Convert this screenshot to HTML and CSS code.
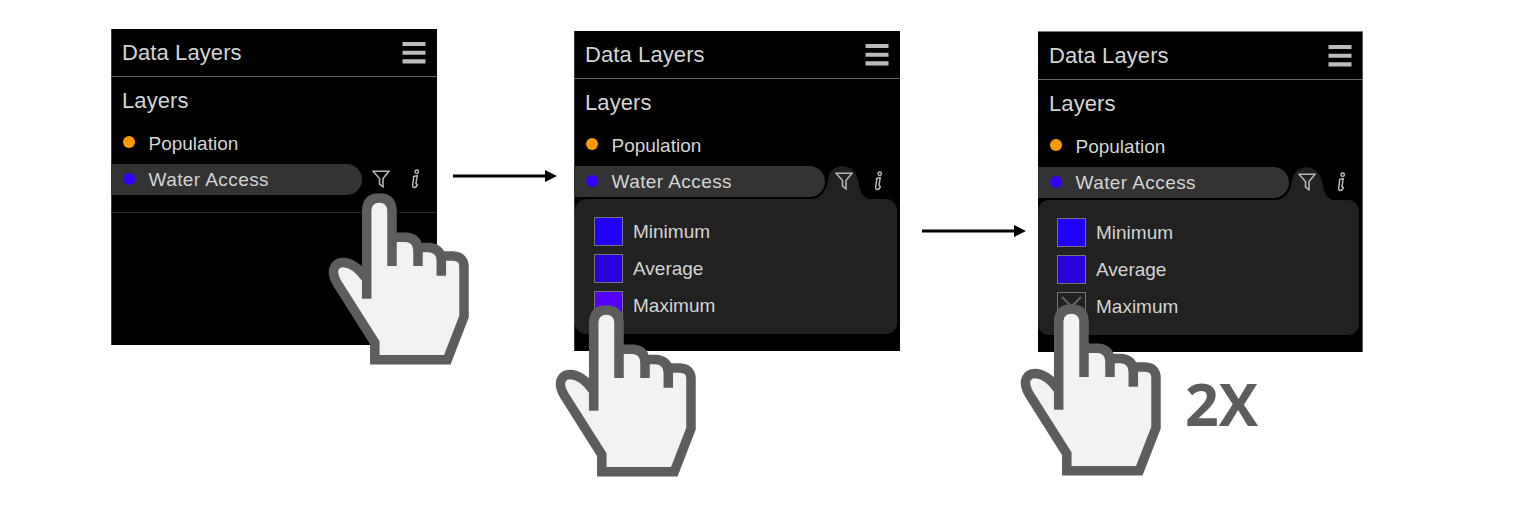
FILE: index.html
```html
<!DOCTYPE html>
<html lang="en">
<head>
<meta charset="utf-8">
<title>Data Layers</title>
<link rel="stylesheet" href="styles.css">
</head>
<body>
<svg class="defs" width="0" height="0">
  <symbol id="hand" viewBox="0 0 142 173">
    <path fill="#f2f2f2" d="M38.7 84V16Q39.500 5 51.300 5Q63.300 5 64 16V44.300H79Q90 45 90 54.500H102Q113.300 56 113.300 63H126Q136 63.500 136 73V123.700L119.300 166.700H46.800V149.700L8.700 89.500C1 76 9 69.400 15 69.400C24 69.500 31 75 38.700 84Z"/>
    <path fill="none" stroke="#5d5d5d" stroke-width="9.500" d="M38.700 105.700V17Q39.500 5 51.300 5Q63.300 5 64 17V73M64 44.300H78Q90 45 90 58V73M88 54.500H101Q113.300 55.500 113.300 68V82.700M112 63H125Q136 63.500 136 74V123.700L119.300 166.700H46.800V149.700L9.200 90.200C1 76 8 69.400 15 69.400C24 69.500 31 75 38.700 86"/>
  </symbol>
  <symbol id="filter" viewBox="0 0 18 18">
    <path fill="none" stroke="#b4b4b4" stroke-width="1.600" d="M1 1.200H17L11 8.500V16.800L7.500 14V8.500Z"/>
  </symbol>
  <symbol id="info" viewBox="0 0 9 20">
    <g fill="none" stroke="#b8b8b8" stroke-width="1.500"><circle cx="5.700" cy="2.800" r="1.700"/><path d="M2.500 7.500L6.200 6.800L5 14.500L6.300 15.500Q5.500 18.500 3.200 18.500Q1.300 18.500 1.700 15.500L2.600 9.500Z"/></g>
  </symbol>
  <symbol id="menu" viewBox="0 0 24 22">
    <path fill="#bcbcbc" d="M.500 0H23.500V4H.500ZM.500 8.700H23.500V12.700H.500ZM.500 17.200H23.500V21.500H.500Z"/>
  </symbol>
  <symbol id="arrow" viewBox="0 0 104 12">
    <path d="M0 4.600H92V0L104 6L92 12V7.400H0Z"/>
  </symbol>
</svg>
<main class="stage">
  <section class="panel panel-first">
    <header class="head"><span>Data Layers</span><svg class="menu"><use href="#menu"/></svg></header>
    <h2 class="title">Layers</h2>
    <div class="row"><i class="dot orange"></i><span>Population</span></div>
    <div class="active"><div class="pill"><i class="dot blue"></i><span class="water">Water Access</span></div><svg class="filter"><use href="#filter"/></svg><svg class="info"><use href="#info"/></svg></div>
    <hr class="rule">
    <svg class="hand hand-first"><use href="#hand"/></svg>
  </section>
  <svg class="arrow arrow-first"><use href="#arrow"/></svg>
  <section class="panel panel-second">
    <header class="head"><span>Data Layers</span><svg class="menu"><use href="#menu"/></svg></header>
    <h2 class="title">Layers</h2>
    <div class="row"><i class="dot orange"></i><span>Population</span></div>
    <div class="active"><svg class="tab" viewBox="0 0 66 34"><path d="M0 34C10 33 17 26 18.500 16C20 5 26 .300 33.500 .300C42 .300 48 7 49.500 16C51 27 55 34 66 34Z"/></svg><div class="pill"><i class="dot blue"></i><span class="water">Water Access</span></div><svg class="filter"><use href="#filter"/></svg><svg class="info"><use href="#info"/></svg></div>
    <div class="options">
      <div class="option"><i class="swatch minimum"></i><span>Minimum</span></div>
      <div class="option"><i class="swatch average"></i><span>Average</span></div>
      <div class="option"><i class="swatch maximum"></i><span>Maximum</span></div>
    </div>
    <svg class="hand hand-second"><use href="#hand"/></svg>
  </section>
  <svg class="arrow arrow-second"><use href="#arrow"/></svg>
  <section class="panel panel-third">
    <header class="head"><span>Data Layers</span><svg class="menu"><use href="#menu"/></svg></header>
    <h2 class="title">Layers</h2>
    <div class="row"><i class="dot orange"></i><span>Population</span></div>
    <div class="active"><svg class="tab" viewBox="0 0 66 34"><path d="M0 34C10 33 17 26 18.500 16C20 5 26 .300 33.500 .300C42 .300 48 7 49.500 16C51 27 55 34 66 34Z"/></svg><div class="pill"><i class="dot blue"></i><span class="water">Water Access</span></div><svg class="filter"><use href="#filter"/></svg><svg class="info"><use href="#info"/></svg></div>
    <div class="options">
      <div class="option"><i class="swatch minimum"></i><span>Minimum</span></div>
      <div class="option"><i class="swatch average"></i><span>Average</span></div>
      <div class="option"><i class="swatch off"><svg viewBox="0 0 27 27"><path d="M4 4L23 23M23 4L4 23"/></svg></i><span>Maximum</span></div>
    </div>
    <svg class="hand hand-third"><use href="#hand"/></svg>
    <strong class="times">2X</strong>
  </section>
</main>
</body>
</html>
```
FILE: styles.css
```css
* { box-sizing: border-box; }
body { margin: 0; background: #fff; overflow: hidden; font-family: "Liberation Sans", Arial, sans-serif; }
.defs { position: absolute; }
.stage { display: flex; align-items: flex-start; width: 1531px; height: 510px; padding: 29px 0 0 111px; }
svg { display: block; flex: none; }
.panel { position: relative; flex: none; width: 326px; height: 320px; background: #000; color: #d4d4d4; box-shadow: inset 1px 0 #3c3c3c; }
.panel-first { height: 316px; }
.panel-second { margin-top: 2px; }
.panel-third { margin-top: 2px; width: 325px; height: 321px; padding-top: 1px; box-shadow: inset 0 1px #777, inset -1px 0 #555; }
.head { display: flex; justify-content: space-between; height: 48px; padding: 13px 11px 0 11px; border-bottom: 1.500px solid #666; font-size: 22px; line-height: 22px; letter-spacing: .1px; }
.menu { width: 24px; height: 22px; }
.title { margin: 0; height: 48px; padding: 13px 0 0 11px; font-size: 22px; line-height: 22px; font-weight: 400; letter-spacing: .1px; }
.row { display: flex; align-items: center; height: 39px; padding: 0 0 2px 12px; gap: 13.500px; font-size: 19px; }
.row .dot { margin-bottom: 3px; }
.dot { width: 12px; height: 12px; border-radius: 50%; flex: none; }
.orange { background: #f90; }
.blue { background: #30f; }
.active { position: relative; display: flex; align-items: flex-start; height: 31px; }
.pill { position: relative; display: flex; align-items: center; gap: 13.500px; width: 251px; height: 31px; padding-left: 12px; padding-bottom: 1px; border-radius: 0 16px 16px 0; background: #333; font-size: 19px; }
.water { letter-spacing: .42px; padding-top: 2px; }
.filter { position: relative; width: 18px; height: 18px; margin: 6px 0 0 9.500px; }
.info { width: 9px; height: 20px; margin: 5px 0 0 21px; }
.rule { height: 1px; margin: 17px 0 0; border: 0; background: #242424; }
.tab { position: absolute; left: 235px; top: 0; width: 66px; height: 34px; fill: #212121; }
.panel-third .filter { margin-left: 8.500px; }
.options { display: flex; flex-direction: column; gap: 8px; width: 321px; height: 135px; margin-top: 2px; padding: 18px 19px; border-radius: 11px; background: #212121; }
.panel-second .options { margin-left: 1px; width: 322px; }
.option { display: flex; align-items: center; gap: 10px; height: 29px; font-size: 19px; }
.swatch { flex: none; width: 29px; height: 29px; border: 1px solid #777; border-right-width: 1.500px; border-bottom-width: 1.500px; }
.minimum { background: #20f; }
.average { background: #2900d9; }
.maximum { background: #50f; }
.off svg { width: 27px; height: 27px; fill: none; stroke: #666; stroke-width: 2; }
.arrow { width: 104px; height: 12px; }
.arrow-first { margin: 141px 17px 0 16px; }
.arrow-second { margin: 196px 12px 0 22px; }
.hand { position: absolute; width: 142px; height: 173px; }
.hand-first { left: 217px; top: 164px; }
.hand-second { left: -19px; top: 273.500px; }
.hand-third { left: -18px; top: 273px; }
.times { position: absolute; left: 147px; top: 331px; color: #5d5d5d; font: 700 59px/82px "Open Sans", sans-serif; }
```
